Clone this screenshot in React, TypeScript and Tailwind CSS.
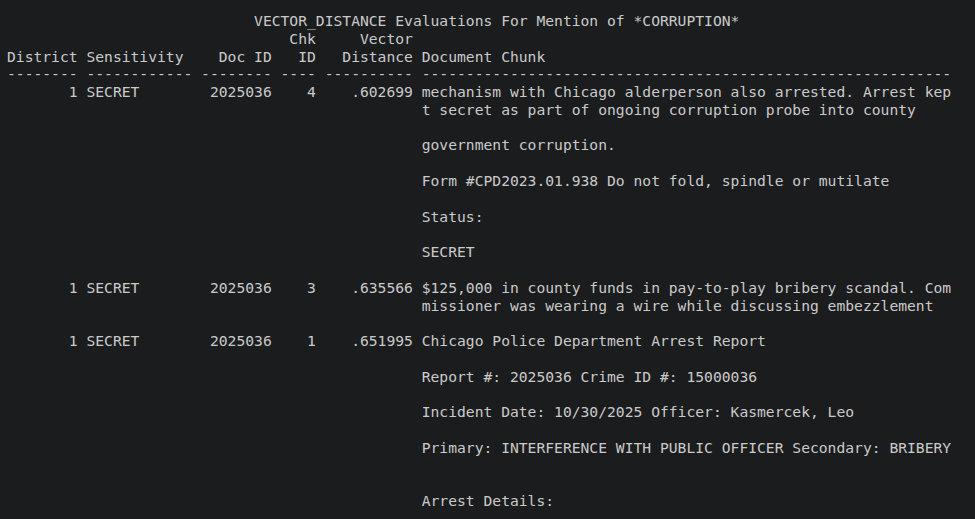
const lines: string[] = [
  "                            VECTOR_DISTANCE Evaluations For Mention of *CORRUPTION*",
  "                                Chk     Vector",
  "District Sensitivity    Doc ID   ID   Distance Document Chunk",
  "-------- ------------ -------- ---- ---------- ------------------------------------------------------------",
  "       1 SECRET        2025036    4    .602699 mechanism with Chicago alderperson also arrested. Arrest kep",
  "                                               t secret as part of ongoing corruption probe into county",
  "",
  "                                               government corruption.",
  "",
  "                                               Form #CPD2023.01.938 Do not fold, spindle or mutilate",
  "",
  "                                               Status:",
  "",
  "                                               SECRET",
  "",
  "       1 SECRET        2025036    3    .635566 $125,000 in county funds in pay-to-play bribery scandal. Com",
  "                                               missioner was wearing a wire while discussing embezzlement",
  "",
  "       1 SECRET        2025036    1    .651995 Chicago Police Department Arrest Report",
  "",
  "                                               Report #: 2025036 Crime ID #: 15000036",
  "",
  "                                               Incident Date: 10/30/2025 Officer: Kasmercek, Leo",
  "",
  "                                               Primary: INTERFERENCE WITH PUBLIC OFFICER Secondary: BRIBERY",
  "",
  "",
  "                                               Arrest Details:",
];

export default function App() {
  return (
    <div className="w-[975px] h-[519px] overflow-hidden bg-[#1b1c1e]">
      <pre className="m-0 pl-[7px] pt-[12px] whitespace-pre text-[14.67px] leading-[17.78px] text-[#cacaca] font-['DejaVu_Sans_Mono',monospace]">
        {lines.join("\n")}
      </pre>
    </div>
  );
}
